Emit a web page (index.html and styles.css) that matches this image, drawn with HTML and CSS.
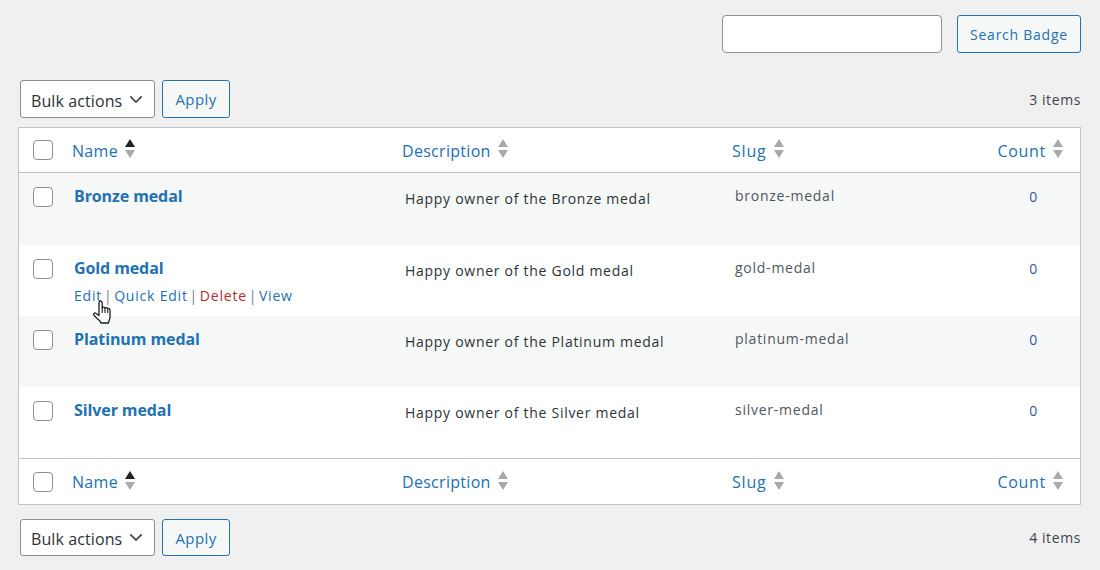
FILE: index.html
```html
<!DOCTYPE html>
<html lang="en">
<head>
<meta charset="utf-8">
<title>Badges</title>
<link rel="stylesheet" href="styles.css">
</head>
<body>
<div class="search-row">
  <input class="search-input" type="text" aria-label="Search">
  <a class="btn btn-search">Search Badge</a>
</div>
<div class="nav nav-top">
  <div class="bulk"><span>Bulk actions</span><svg class="chev" viewBox="0 0 16 10" width="14" height="9"><path d="M1.500 1.500 8 8l6.500-6.500" fill="none" stroke="#444" stroke-width="2"/></svg></div>
  <a class="btn btn-apply">Apply</a>
  <span class="items">3 items</span>
</div>
<table class="list">
  <thead>
    <tr>
      <th class="c-cb"><span class="cb"></span></th>
      <th class="c-name"><div class="head"><a>Name</a><span class="sort"><i class="up dark"></i><i class="down"></i></span></div></th>
      <th class="c-desc"><div class="head"><a>Description</a><span class="sort"><i class="up"></i><i class="down"></i></span></div></th>
      <th class="c-slug"><div class="head"><a>Slug</a><span class="sort"><i class="up"></i><i class="down"></i></span></div></th>
      <th class="c-count"><div class="head"><a>Count</a><span class="sort"><i class="up"></i><i class="down"></i></span></div></th>
    </tr>
  </thead>
  <tbody>
    <tr class="alt">
      <td class="c-cb"><span class="cb"></span></td>
      <td class="c-name"><a class="title">Bronze medal</a></td>
      <td class="c-desc"><p>Happy owner of the Bronze medal</p></td>
      <td class="c-slug">bronze-medal</td>
      <td class="c-count"><a>0</a></td>
    </tr>
    <tr>
      <td class="c-cb"><span class="cb"></span></td>
      <td class="c-name"><a class="title">Gold medal</a>
        <div class="actions"><a>Edit</a> | <a>Quick Edit</a> | <a class="del">Delete</a> | <a>View</a>
          <svg class="cursor" viewBox="0 0 18 24" width="18" height="24"><path d="M6 3c0-2.600 3.200-2.600 3.200 0V8c.6-1.400 2.600-1.200 2.800.4.500-1.200 2.500-1 2.700.6.500-.8 2.300-.6 2.300 1V17c0 2-1.200 3.500-1.500 6H8c-.5-2-2.500-3.200-4-4.600L1 15.200c-1-1.400.8-3 2.200-1.800L6 15.500Z" fill="#fff" stroke="#1d1d1d" stroke-width="1.300" stroke-linejoin="round"/><path d="M9.200 8v5M12 8.500V13M14.700 9.500V13" stroke="#1d1d1d" stroke-width="1.100" fill="none"/></svg>
        </div>
      </td>
      <td class="c-desc"><p>Happy owner of the Gold medal</p></td>
      <td class="c-slug">gold-medal</td>
      <td class="c-count"><a>0</a></td>
    </tr>
    <tr class="alt">
      <td class="c-cb"><span class="cb"></span></td>
      <td class="c-name"><a class="title">Platinum medal</a></td>
      <td class="c-desc"><p>Happy owner of the Platinum medal</p></td>
      <td class="c-slug">platinum-medal</td>
      <td class="c-count"><a>0</a></td>
    </tr>
    <tr>
      <td class="c-cb"><span class="cb"></span></td>
      <td class="c-name"><a class="title">Silver medal</a></td>
      <td class="c-desc"><p>Happy owner of the Silver medal</p></td>
      <td class="c-slug">silver-medal</td>
      <td class="c-count"><a>0</a></td>
    </tr>
  </tbody>
  <tfoot>
    <tr>
      <th class="c-cb"><span class="cb"></span></th>
      <th class="c-name"><div class="head"><a>Name</a><span class="sort"><i class="up dark"></i><i class="down"></i></span></div></th>
      <th class="c-desc"><div class="head"><a>Description</a><span class="sort"><i class="up"></i><i class="down"></i></span></div></th>
      <th class="c-slug"><div class="head"><a>Slug</a><span class="sort"><i class="up"></i><i class="down"></i></span></div></th>
      <th class="c-count"><div class="head"><a>Count</a><span class="sort"><i class="up"></i><i class="down"></i></span></div></th>
    </tr>
  </tfoot>
</table>
<div class="nav nav-bottom">
  <div class="bulk"><span>Bulk actions</span><svg class="chev" viewBox="0 0 16 10" width="14" height="9"><path d="M1.500 1.500 8 8l6.500-6.500" fill="none" stroke="#444" stroke-width="2"/></svg></div>
  <a class="btn btn-apply">Apply</a>
  <span class="items">4 items</span>
</div>
</body>
</html>
```
FILE: styles.css
```css
* { box-sizing: border-box; }
html, body { margin: 0; height: 570px; overflow: hidden; }
body {
  background: #f0f0f1;
  font-family: "Open Sans", "Noto Sans", "Liberation Sans", sans-serif;
  font-size: 14px;
  color: #3c434a;
  padding: 15px 19px 0 18px;
}
a { color: #2271b1; }
.search-row { display: flex; justify-content: flex-end; gap: 15px; height: 38px; }
.search-input { width: 220px; height: 38px; border: 1px solid #8c8f94; border-radius: 4px; background: #fff; }
.btn {
  display: flex; align-items: center; justify-content: center;
  border: 1px solid #2271b1; border-radius: 3px; background: #f6f7f7;
  color: #2271b1; font-size: 14px;
}
.btn-search { width: 124px; height: 38px; letter-spacing: .75px; }
.btn-apply { width: 68px; height: 38px; font-size: 15px; letter-spacing: .4px; }
.nav { display: flex; align-items: center; gap: 7px; padding-left: 2px; }
.nav-top { margin-top: 27px; margin-bottom: 9px; }
.nav-bottom { margin-top: 14px; }
.nav-bottom .bulk, .nav-bottom .btn-apply { height: 37px; }
.bulk {
  width: 135px; height: 38px; display: flex; align-items: center; justify-content: space-between;
  padding: 0 11px 0 10px; background: #fff; border: 1px solid #8c8f94; border-radius: 3px;
  font-size: 16px; color: #2c3338; letter-spacing: .1px;
}
.bulk span { padding-top: 3px; }
.items { margin-left: auto; font-size: 14px; color: #3c434a; letter-spacing: .6px; }
.list {
  width: 1063px; border-collapse: separate; border-spacing: 0; table-layout: fixed;
  background: #fff; border: 1px solid #c3c4c7;
}
.list th { padding: 0; font-weight: 400; text-align: left; font-size: 16px; white-space: nowrap; letter-spacing: .3px; }
.list thead th { border-bottom: 1px solid #c3c4c7; height: 45px; }
.list tfoot th { border-top: 1px solid #c3c4c7; height: 46px; }
.list td { height: 71px; padding: 12px 0 0; vertical-align: top; font-size: 14px; letter-spacing: .75px; }
.list tbody tr:first-child td { height: 72px; }
.alt td { background: #f6f7f7; }
.c-cb { width: 43px; padding-left: 14px !important; }
.c-name { width: 330px; padding-left: 10px !important; }
.c-desc { width: 330px; padding-left: 10px !important; }
.c-slug { width: 230px; padding-left: 10px !important; }
.c-count { width: auto; }
td.c-cb .cb { margin-top: 2px; }
td.c-name { padding-left: 12px !important; }
td.c-desc { padding-left: 13px !important; letter-spacing: .72px; }
td.c-slug { padding-left: 13px !important; padding-top: 13px !important; color: #50575e; }
td.c-count { text-align: right; padding-right: 42px !important; padding-top: 14px !important; }
td.c-count a { color: #3858a8; }
td.c-desc p { margin: 4px 0 0; color: #2c3338; }
.cb { display: block; width: 20px; height: 20px; background: #fff; border: 1px solid #8c8f94; border-radius: 4px; }
.title { font-size: 16px; font-weight: 700; line-height: 22px; letter-spacing: -.1px; }
.actions { position: relative; margin-top: 7px; font-size: 14px; line-height: 19px; color: #787c82; white-space: nowrap; letter-spacing: .7px; word-spacing: -2.500px; }
.actions a { word-spacing: 0; letter-spacing: .8px; }
.del { color: #b32d2e; }
.cursor { position: absolute; left: 19px; top: 14px; }
.head { display: flex; align-items: center; gap: 7px; }
.head a { padding-top: 2px; }
tfoot .head a { padding-top: 0; }
th.c-slug .head a { letter-spacing: .8px; }
th.c-count .head a { letter-spacing: .7px; }
th.c-count .head { justify-content: flex-end; padding-right: 17px; }
.sort { display: flex; flex-direction: column; gap: 3px; margin-top: -3px; }
.sort i { display: block; width: 0; height: 0; border-left: 5.500px solid transparent; border-right: 5.500px solid transparent; }
.sort .up { border-bottom: 8px solid #a7aaad; }
.sort .down { border-top: 8px solid #a7aaad; }
.sort .dark { border-bottom-color: #1d2327; }
```
